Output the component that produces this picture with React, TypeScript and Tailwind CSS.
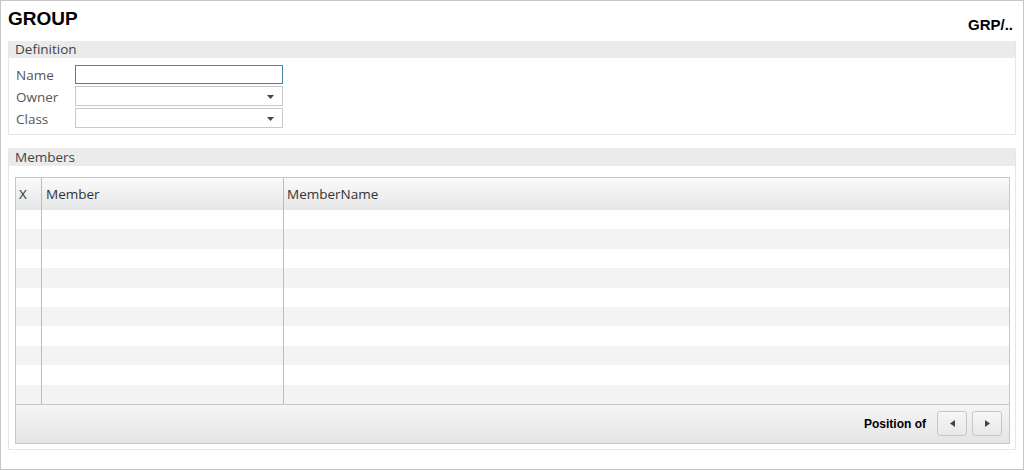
import React from "react";

const Caret = () => (
  <svg width="7" height="4" viewBox="0 0 7 4" className="absolute right-[8px] top-[8px]">
    <path d="M0 0 L7 0 L3.5 4 Z" fill="#444" />
  </svg>
);

function Field({ label, focused, select }: { label: string; focused?: boolean; select?: boolean }) {
  return (
    <div className="flex items-center h-[22px]">
      <div className="w-[59px] text-[13.5px] text-[#555] pt-[2px]">{label}</div>
      <div
        className={
          focused
            ? "relative w-[208px] h-[19px] border border-[#3f87a6] bg-white"
            : "relative w-[208px] h-[20px] border border-[#c9c9c9] bg-white"
        }
      >
        {select && <Caret />}
      </div>
    </div>
  );
}

export default function App() {
  const rows = Array.from({ length: 10 }, (_, i) => i);
  return (
    <div
      className="w-[1024px] h-[470px] bg-white border border-[#c6c6c6] relative overflow-hidden"
      style={{ fontFamily: '"Open Sans", "Noto Sans", sans-serif' }}
    >
      <div className="flex justify-between px-[7px] pr-[10px]">
        <div
          className="text-[19px] font-bold text-black leading-none pt-[8px]"
          style={{ fontFamily: '"Liberation Sans", Arial, sans-serif' }}
        >
          GROUP
        </div>
        <div
          className="text-[15px] font-bold text-black leading-none pt-[16px]"
          style={{ fontFamily: '"Liberation Sans", Arial, sans-serif' }}
        >
          GRP/..
        </div>
      </div>

      {/* Definition */}
      <div className="mx-[7px] mt-[9px] border border-[#e6e6e6] border-t-0">
        <div className="h-[17px] bg-[#ebebeb] text-[13.5px] text-[#444] leading-[17px] pl-[6px]">Definition</div>
        <div className="pl-[7px] pt-[5px] pb-[5px] flex flex-col">
          <Field label="Name" focused />
          <Field label="Owner" select />
          <Field label="Class" select />
        </div>
      </div>

      {/* Members */}
      <div className="mx-[7px] mt-[13px] border border-[#e6e6e6] border-t-0 h-[302px]">
        <div className="h-[18px] bg-[#ebebeb] text-[13.5px] text-[#444] leading-[18px] pl-[6px]">Members</div>
        <div className="ml-[6px] mr-[5px] mt-[11px] border border-[#c8c8c8] flex flex-col">
          <div className="flex h-[32px] bg-gradient-to-b from-[#fafafa] to-[#e6e6e6] text-[13.5px] text-[#333]">
            <div className="w-[26px] border-r border-[#bcbcbc] pl-[3px] flex items-center">X</div>
            <div className="w-[242px] border-r border-[#bcbcbc] pl-[4px] flex items-center">Member</div>
            <div className="flex-1 pl-[3px] flex items-center">MemberName</div>
          </div>
          {rows.map((i) => (
            <div key={i} className={i % 2 === 0 ? "flex h-[19.4px] bg-white" : "flex h-[19.4px] bg-[#f3f3f3]"}>
              <div className="w-[26px] border-r border-[#bcbcbc]" />
              <div className="w-[242px] border-r border-[#bcbcbc]" />
              <div className="flex-1" />
            </div>
          ))}
          <div className="h-[39px] border-t border-[#c8c8c8] bg-gradient-to-b from-[#f5f5f5] to-[#e5e5e5] flex items-center justify-end pr-[7px]">
            <span
              className="text-[12px] font-bold text-black mr-[11px]"
              style={{ fontFamily: '"Liberation Sans", Arial, sans-serif' }}
            >
              Position of
            </span>
            <button className="w-[30px] h-[25px] border border-[#c6c6c6] rounded-[3px] bg-gradient-to-b from-[#f7f7f7] to-[#e8e8e8] flex items-center justify-center mr-[5px]">
              <svg width="5" height="7" viewBox="0 0 5 7"><path d="M5 0 L5 7 L0 3.5 Z" fill="#444" /></svg>
            </button>
            <button className="w-[30px] h-[25px] border border-[#c6c6c6] rounded-[3px] bg-gradient-to-b from-[#f7f7f7] to-[#e8e8e8] flex items-center justify-center">
              <svg width="5" height="7" viewBox="0 0 5 7"><path d="M0 0 L0 7 L5 3.5 Z" fill="#444" /></svg>
            </button>
          </div>
        </div>
      </div>
    </div>
  );
}
